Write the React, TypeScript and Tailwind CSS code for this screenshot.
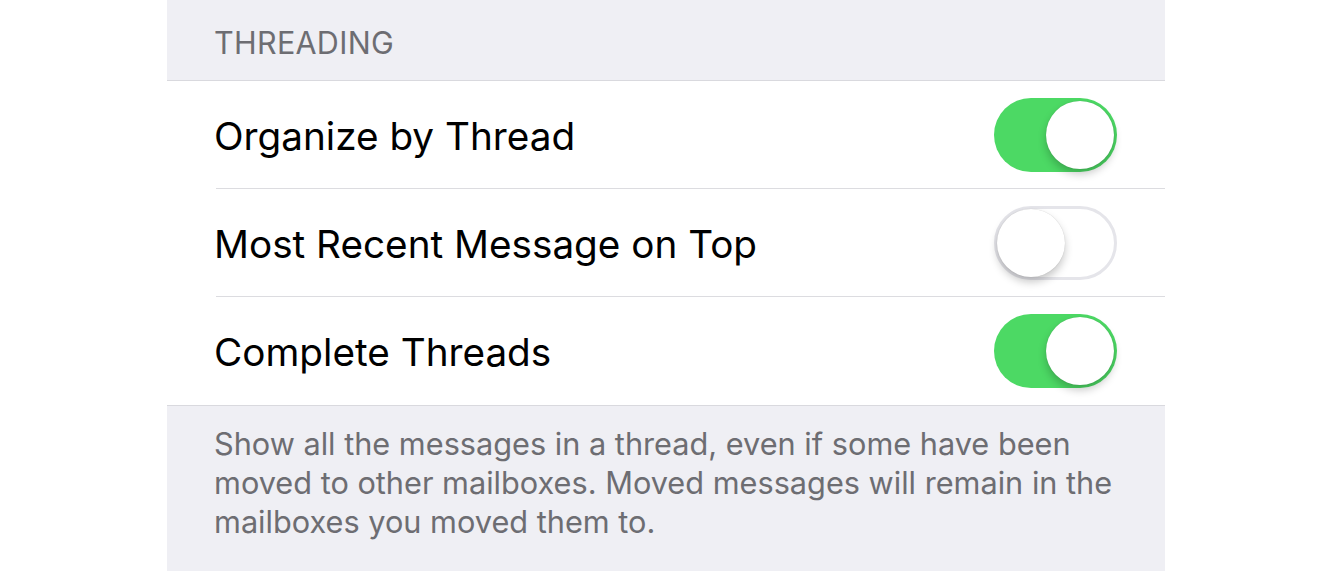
import { useState } from 'react';

type Row = { label: string; on: boolean };

const rows: Row[] = [
  { label: 'Organize by Thread', on: true },
  { label: 'Most Recent Message on Top', on: false },
  { label: 'Complete Threads', on: true },
];

function Toggle({ on, onChange }: { on: boolean; onChange: () => void }) {
  return (
    <button
      onClick={onChange}
      className={`relative h-[74px] w-[123px] rounded-full transition-colors ${
        on ? 'bg-[#4cd964]' : 'border-[3px] border-[#e5e5ea] bg-white'
      }`}
    >
      <span
        className={`absolute top-1/2 h-[68px] w-[68px] -translate-y-1/2 rounded-full bg-white shadow-[0_5px_8px_rgba(0,0,0,0.22),0_0_1px_rgba(0,0,0,0.2)] ${
          on ? 'right-[3px]' : 'left-0'
        }`}
      />
    </button>
  );
}

export default function App() {
  const [state, setState] = useState(rows.map((r) => r.on));

  return (
    <div className="flex h-[571px] w-full justify-center bg-white font-['Inter',sans-serif]">
      <div className="flex w-[998px] flex-col bg-[#efeff4]">
        {/* section header */}
        <div className="flex h-[80px] items-end pb-[14px] pl-[47px] text-[30.5px] tracking-[0.3px] text-[#6d6d72]">
          THREADING
        </div>

        <div className="border-y border-[#d9d9de] bg-white">
          {rows.map((row, i) => (
            <div key={row.label} className="pl-[49px]">
              <div
                className={`flex h-[108px] items-center justify-between pr-[48px] ${
                  i < rows.length - 1 ? 'border-b border-[#dcdce0]' : ''
                }`}
              >
                <span className="-ml-[2px] pt-[3px] text-[38.7px] text-black">{row.label}</span>
                <Toggle
                  on={state[i]}
                  onChange={() => setState((s) => s.map((v, j) => (j === i ? !v : v)))}
                />
              </div>
            </div>
          ))}
        </div>

        {/* footer note */}
        <p className="pl-[47px] pt-[18px] text-[30.7px] leading-[39px] text-[#6d6d72]">
          Show all the messages in a thread, even if some have been
          <br />
          moved to other mailboxes. Moved messages will remain in the
          <br />
          mailboxes you moved them to.
        </p>
      </div>
    </div>
  );
}
